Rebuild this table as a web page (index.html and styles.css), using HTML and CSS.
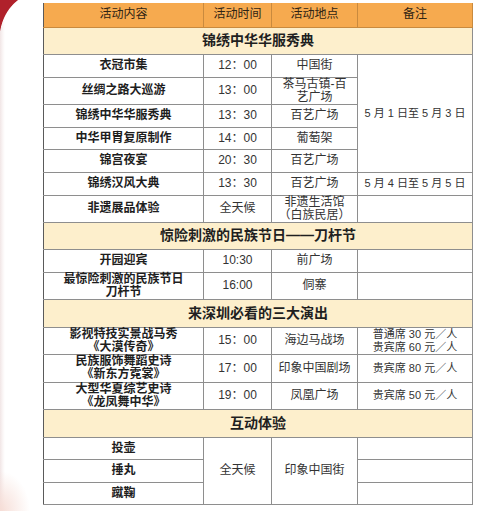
FILE: index.html
```html
<!DOCTYPE html>
<html lang="zh">
<head>
<meta charset="utf-8">
<title>活动安排</title>
<link rel="stylesheet" href="styles.css">
</head>
<body>
<div class="corner"></div>
<main class="page">
<table class="schedule">
<colgroup><col class="c1"><col class="c2"><col class="c3"><col class="c4"></colgroup>
<thead>
<tr class="head"><th>活动内容</th><th>活动时间</th><th>活动地点</th><th>备注</th></tr>
</thead>
<tbody>
<tr class="section"><td colspan="4">锦绣中华华服秀典</td></tr>
<tr class="h23"><td class="name">衣冠市集</td><td>12：00</td><td>中国街</td><td class="note" rowspan="5">5 月 1 日至 5 月 3 日</td></tr>
<tr class="h27"><td class="name">丝绸之路大巡游</td><td>13：00</td><td class="two">茶马古镇-百<br>艺广场</td></tr>
<tr class="h23"><td class="name">锦绣中华华服秀典</td><td>13：30</td><td>百艺广场</td></tr>
<tr class="h22"><td class="name">中华甲胄复原制作</td><td>14：00</td><td>葡萄架</td></tr>
<tr class="h23"><td class="name">锦宫夜宴</td><td>20：30</td><td>百艺广场</td></tr>
<tr class="h23"><td class="name">锦绣汉风大典</td><td>13：30</td><td>百艺广场</td><td class="note">5 月 4 日至 5 月 5 日</td></tr>
<tr class="h27"><td class="name">非遗展品体验</td><td>全天候</td><td class="two">非遗生活馆<br>（白族民居）</td><td></td></tr>
<tr class="section"><td colspan="4">惊险刺激的民族节日——刀杆节</td></tr>
<tr class="h23"><td class="name">开园迎宾</td><td>10:30</td><td>前广场</td><td></td></tr>
<tr class="h27"><td class="name two">最惊险刺激的民族节日<br>刀杆节</td><td>16:00</td><td>侗寨</td><td></td></tr>
<tr class="section s28"><td colspan="4">来深圳必看的三大演出</td></tr>
<tr class="h27"><td class="name two">影视特技实景战马秀<br>《大漠传奇》</td><td>15：00</td><td>海边马战场</td><td class="note two">普通席 30 元／人<br>贵宾席 60 元／人</td></tr>
<tr class="h28"><td class="name two">民族服饰舞蹈史诗<br>《新东方霓裳》</td><td>17：00</td><td>印象中国剧场</td><td class="note">贵宾席 80 元／人</td></tr>
<tr class="h27"><td class="name two">大型华夏综艺史诗<br>《龙凤舞中华》</td><td>19：00</td><td>凤凰广场</td><td class="note">贵宾席 50 元／人</td></tr>
<tr class="section s28"><td colspan="4">互动体验</td></tr>
<tr class="h22"><td class="name">投壶</td><td rowspan="3">全天候</td><td rowspan="3">印象中国街</td><td></td></tr>
<tr class="h23"><td class="name">捶丸</td><td></td></tr>
<tr class="h22"><td class="name">蹴鞠</td><td></td></tr>
</tbody>
</table>
</main>
</body>
</html>
```

FILE: styles.css
```css
html, body {
  margin: 0;
  padding: 0;
}
body {
  width: 494px;
  height: 511px;
  overflow: hidden;
  position: relative;
  font-family: "Liberation Sans", "Noto Sans CJK SC", sans-serif;
  color: #333;
  background:
    radial-gradient(ellipse 30px 40px at 0 511px, #f6ddd6 0, rgba(246,221,214,0) 100%),
    linear-gradient(to right, #f1e6e6 0, #fbf7f7 3px, #ffffff 5px);
}
.corner {
  position: absolute;
  left: 0;
  top: 0;
  width: 42px;
  height: 48px;
  background: radial-gradient(ellipse 41px 48px at 40px 40px, rgba(176,33,43,0) 98%, #b0212b 100%);
}
.page {
  padding: 3px 0 0 43px;
}
.schedule {
  border-collapse: collapse;
  table-layout: fixed;
  width: 429px;
  font-size: 12px;
  line-height: 13px;
}
.c1 { width: 160px; }
.c2 { width: 68px; }
.c3 { width: 86px; }
.c4 { width: 115px; }
.schedule th,
.schedule td {
  border: 1px solid #8e8e8e;
  padding: 0 2px;
  text-align: center;
  vertical-align: middle;
  white-space: nowrap;
}
.schedule tr > :first-child {
  border-left-color: #5a5a5a;
}
.head {
  height: 24px;
  background: #f6aa4f;
}
.head th {
  font-weight: normal;
  color: #2f2414;
  border-color: #c98a3e;
  border-top: none;
}
.section {
  height: 27px;
  background: #fdefcc;
}
.section td {
  font-size: 14px;
  font-weight: bold;
  color: #1f1f1f;
}
.s28 { height: 28px; }
.h22 { height: 22px; }
.h23 { height: 23px; }
.h27 { height: 27px; }
.h28 { height: 28px; }
.name {
  font-weight: bold;
  color: #1e1e1e;
}
.note {
  font-size: 11px;
}
.two {
  line-height: 13px;
}
```
